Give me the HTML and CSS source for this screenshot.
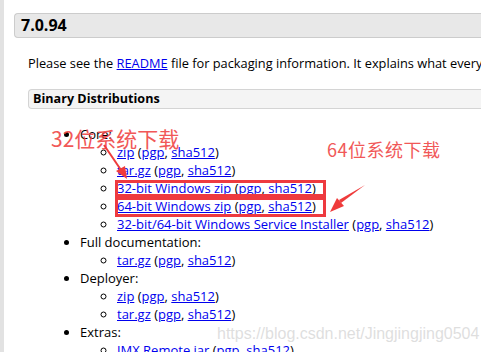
FILE: index.html
```html
<!DOCTYPE html>
<html lang="en">
<head>
  <meta charset="UTF-8">
  <title>Tomcat 7.0.94</title>
  <link rel="stylesheet" href="styles.css">
</head>
<body>
  <div class="page">
    <h3 class="release">7.0.94</h3>
    <div class="section">
      <p>Please see the <a href="#">README</a> file for packaging information. It explains what every distribution contains.</p>

      <h4 class="dist-title">Binary Distributions</h4>
      <ul class="dist">
        <li>Core:
          <ul>
            <li><a href="#">zip</a> (<a href="#">pgp</a>, <a href="#">sha512</a>)</li>
            <li><a href="#">tar.gz</a> (<a href="#">pgp</a>, <a href="#">sha512</a>)</li>
            <li><a href="#">32-bit Windows zip</a> (<a href="#">pgp</a>, <a href="#">sha512</a>)</li>
            <li><a href="#">64-bit Windows zip</a> (<a href="#">pgp</a>, <a href="#">sha512</a>)</li>
            <li><a href="#">32-bit/64-bit Windows Service Installer</a> (<a href="#">pgp</a>, <a href="#">sha512</a>)</li>
          </ul>
        </li>
        <li>Full documentation:
          <ul>
            <li><a href="#">tar.gz</a> (<a href="#">pgp</a>, <a href="#">sha512</a>)</li>
          </ul>
        </li>
        <li>Deployer:
          <ul>
            <li><a href="#">zip</a> (<a href="#">pgp</a>, <a href="#">sha512</a>)</li>
            <li><a href="#">tar.gz</a> (<a href="#">pgp</a>, <a href="#">sha512</a>)</li>
          </ul>
        </li>
        <li>Extras:
          <ul>
            <li><a href="#">JMX Remote jar</a> (<a href="#">pgp</a>, <a href="#">sha512</a>)</li>
          </ul>
        </li>
      </ul>
    </div>

    <!-- annotations drawn over the screenshot -->
    <div class="note note-32">32位系统下载</div>
    <div class="note note-64">64位系统下载</div>
    <div class="mark mark-32"></div>
    <div class="mark mark-64"></div>
    <svg class="arrows" width="481" height="352" viewBox="0 0 481 352">
      <line x1="100" y1="145" x2="117" y2="170" stroke="#ef3b3b" stroke-width="2"/>
      <polygon points="123,179 112,171 121,166" fill="#ef3b3b"/>
      <polygon points="361,185 337,203 335,200" fill="#ef3b3b"/>
      <polygon points="326,212 333,198 340,206" fill="#ef3b3b"/>
    </svg>
    <div class="watermark">https://blog.csdn.net/Jingjingjing0504</div>
  </div>
</body>
</html>
```

FILE: styles.css
```css
body {
  margin: 0;
  font-family: "Open Sans", sans-serif;
  font-size: 13px;
  color: #000;
  background: white;
  overflow: hidden;
}
a {
  color: #0000ee;
}
.page {
  position: relative;
  height: 352px;
  border-left: 4px solid #e2e2e2;
  padding: 13px 0 0 10px;
  box-sizing: border-box;
}
.release {
  margin: 0;
  height: 23px;
  line-height: 23px;
  padding-left: 6px;
  font-size: 16px;
  background: #e8e8e8;
  border: 1px solid #ccc;
  border-right: none;
  border-radius: 4px 0 0 4px;
}
.section {
  margin-left: 14px;
}
.section p {
  margin: 16px 0 0;
  font-size: 12.8px;
  line-height: 18px;
  white-space: nowrap;
}
.dist-title {
  margin: 17px 0 0;
  height: 18px;
  line-height: 18px;
  padding-left: 4px;
  font-size: 12.6px;
  background: #f4f4f4;
  border: 1px solid #d4d4d4;
  border-right: none;
  border-radius: 4px 0 0 4px;
}
.dist {
  margin: 16px 0 0;
  padding-left: 52px;
  line-height: 18px;
}
.dist ul {
  margin: 0;
  padding-left: 37px;
  list-style: circle;
}
.note {
  position: absolute;
  color: #f04646;
  font-family: "Noto Sans CJK SC", sans-serif;
  line-height: 22px;
  opacity: 0.9;
}
.note-32 {
  left: 47px;
  top: 127px;
  font-size: 21px;
}
.note-64 {
  left: 323px;
  top: 138px;
  font-size: 18px;
  letter-spacing: 0.5px;
}
.mark {
  position: absolute;
  left: 111px;
  width: 205px;
  border: 3px solid #ee3a3f;
}
.mark-32 {
  top: 180px;
  height: 11px;
}
.mark-64 {
  top: 197px;
  height: 14px;
}
.arrows {
  position: absolute;
  left: 0;
  top: 0;
}
.watermark {
  position: absolute;
  left: 213px;
  top: 325px;
  font-family: "Liberation Sans", Arial, sans-serif;
  font-size: 16px;
  color: rgba(190, 190, 190, 0.5);
}
```
